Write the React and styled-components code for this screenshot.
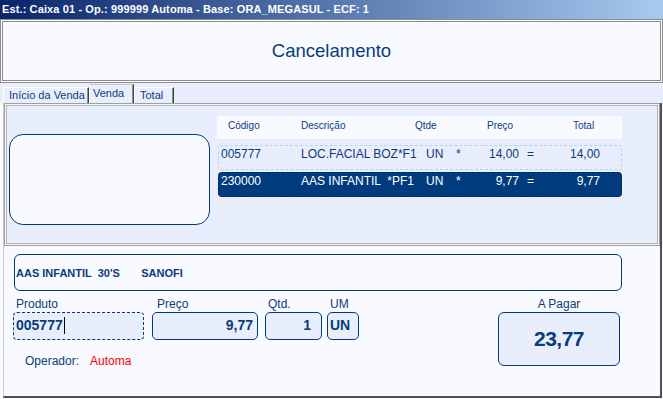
import React from 'react';
import styled, { createGlobalStyle } from 'styled-components';

const NAVY = '#003c7d';
const TEXT = '#0a3c7c';

const GlobalStyle = createGlobalStyle`
  html, body { margin: 0; padding: 0; background: #f8faff; }
  body { font-family: "Liberation Sans", Arial, sans-serif; }
  * { box-sizing: border-box; }
`;

const Window = styled.div`
  width: 663px;
  height: 399px;
  overflow: hidden;
  display: flex;
  flex-direction: column;
  background: #f8faff;
`;

const TitleBar = styled.div`
  height: 19px;
  flex: none;
  background: linear-gradient(to right, #0a246a, #a6caf0);
  color: #fff;
  font-weight: bold;
  font-size: 11px;
  letter-spacing: 0.12px;
  padding-left: 2px;
  line-height: 18px;
  white-space: nowrap;
`;

const Header = styled.header`
  height: 64px;
  flex: none;
  border: 1px solid #8c8c8c;
  box-shadow: inset 0 0 0 1px #fff, inset 0 0 0 2px #8c8c8c;
  background: #f8faff;
  display: flex;
  align-items: center;
  justify-content: center;
  padding-bottom: 1px;
  color: ${TEXT};
  font-size: 18.5px;
`;

const TabStrip = styled.div`
  height: 20px;
  flex: none;
  background: #e8eefc;
  display: flex;
  align-items: flex-end;
  padding-left: 3px;
`;

const Tab = styled.div`
  width: ${p => p.$w}px;
  flex: none;
  overflow: hidden;
  height: ${p => (p.$active ? 19 : 16)}px;
  padding-left: ${p => p.$pl}px;
  padding-top: ${p => (p.$active ? 1 : 0)}px;
  border-top: 1px solid ${p => (p.$active ? '#c4c4c4' : '#ffffff')};
  border-left: 1px solid #ffffff;
  border-right: 1px solid #404040;
  box-shadow: inset -1px 0 0 #909090;
  background: #e8eefc;
  color: ${TEXT};
  font-size: 11px;
  letter-spacing: ${p => p.$ls || 0}px;
  line-height: 15px;
  white-space: nowrap;
`;

const Body = styled.div`
  flex: 1;
  margin: 0 1px 1px 3px;
  border-left: 1px solid #c8c8c8;
  border-right: 2px solid #505050;
  border-bottom: 2px solid #505050;
  background: #f8faff;
  display: flex;
  flex-direction: column;
`;

const TabPanel = styled.div`
  height: 143px;
  flex: none;
  background: #e8eefc;
  border: 1px solid #a0a0a0;
  box-shadow: inset 0 0 0 1px #f4f6fc, inset 0 0 0 2px #b4b4b4;
  display: flex;
  align-items: flex-start;
`;

const ImageBox = styled.div`
  width: 201px;
  height: 91px;
  margin: 30px 0 0 4px;
  border: 1px solid ${NAVY};
  border-radius: 14px;
  background: #f8faff;
`;

const Grid = styled.div`
  width: 405px;
  margin: 12px 0 0 7px;
  display: flex;
  flex-direction: column;
`;

const GridHeader = styled.div`
  height: 23px;
  background: #f8faff;
  display: flex;
  padding-left: 11px;
  font-size: 10px;
  line-height: 20px;
  color: ${TEXT};
`;

const HeadCell = styled.div`
  width: ${p => (p.$w ? `${p.$w}px` : 'auto')};
  flex: none;
`;

const Row = styled.div`
  height: 25px;
  margin: ${p => p.$mt}px 0 0 1px;
  border: 1px dashed ${p => (p.$selected ? '#0a2550' : '#b4d2f2')};
  border-radius: ${p => (p.$selected ? 4 : 2)}px;
  background: ${p => (p.$selected ? NAVY : 'transparent')};
  color: ${p => (p.$selected ? '#ffffff' : TEXT)};
  display: grid;
  grid-template-columns: 80px 125px 30px 20px 43px 20px 61px;
  padding-left: 2px;
  font-size: 12px;
  line-height: 17px;
  white-space: pre;
`;

const Cell = styled.div`
  text-align: ${p => (p.$right ? 'right' : 'left')};
  padding-left: ${p => p.$pl || 0}px;
`;

const DescBox = styled.div`
  width: 608px;
  height: 37px;
  margin: 8px 0 0 10px;
  border: 1px solid ${NAVY};
  border-radius: 6px;
  background: #f8faff;
  display: flex;
  align-items: center;
  padding-left: 1px;
  color: ${TEXT};
  font-size: 11px;
  font-weight: bold;
  white-space: pre;
`;

const FormArea = styled.div`
  display: flex;
  align-items: flex-start;
  margin-top: 6px;
`;

const LeftColumn = styled.div`
  display: flex;
  flex-direction: column;
`;

const FieldsRow = styled.div`
  display: flex;
  align-items: flex-start;
`;

const Field = styled.div`
  width: ${p => p.$w}px;
  margin-left: ${p => p.$ml}px;
  display: flex;
  flex-direction: column;
  flex: none;
`;

const Label = styled.div`
  height: 15px;
  line-height: 14px;
  font-size: 12px;
  color: ${TEXT};
  padding-left: ${p => p.$pl || 0}px;
  text-align: ${p => (p.$center ? 'center' : 'left')};
  white-space: nowrap;
`;

const Input = styled.div`
  height: 28px;
  border: 1px ${p => (p.$dashed ? 'dashed' : 'solid')} ${NAVY};
  border-radius: ${p => (p.$dashed ? 4 : 5)}px;
  background: #e8eefc;
  display: flex;
  align-items: center;
  justify-content: ${p => (p.$right ? 'flex-end' : 'flex-start')};
  padding: 0 ${p => p.$pr || 0}px 3px ${p => p.$pl || 0}px;
  color: ${TEXT};
  font-size: 14px;
  font-weight: bold;
`;

const Caret = styled.span`
  display: inline-block;
  width: 1px;
  height: 17px;
  margin-left: 1px;
  margin-top: 2px;
  background: #000;
`;

const TotalBox = styled.div`
  height: 54px;
  border: 1px solid ${NAVY};
  border-radius: 6px;
  background: #e8eefc;
  display: flex;
  align-items: center;
  justify-content: center;
  color: ${TEXT};
  font-size: 21px;
  font-weight: bold;
  letter-spacing: -0.5px;
`;

const OperatorRow = styled.div`
  margin: 14px 0 0 21px;
  display: flex;
  gap: 11px;
  font-size: 12px;
  line-height: 14px;
`;

const OperatorLabel = styled.span`
  color: ${TEXT};
`;

const OperatorName = styled.span`
  color: #ff0000;
`;

const rows = [
  { code: '005777', desc: 'LOC.FACIAL BOZ*F1', un: 'UN', price: '14,00', total: '14,00' },
  { code: '230000', desc: 'AAS INFANTIL  *PF1', un: 'UN', price: '9,77', total: '9,77', selected: true },
];

export default function App() {
  return (
    <>
      <GlobalStyle />
      <Window>
        <TitleBar>Est.: Caixa 01 - Op.: 999999 Automa - Base: ORA_MEGASUL - ECF: 1</TitleBar>
        <Header>Cancelamento</Header>
        <TabStrip>
          <Tab $w={86} $pl={5}>Início da Venda</Tab>
          <Tab $w={45} $pl={3} $active>Venda</Tab>
          <Tab $w={40} $pl={5}>Total</Tab>
        </TabStrip>
        <Body>
          <TabPanel>
            <ImageBox />
            <Grid>
              <GridHeader>
                <HeadCell $w={73}>Código</HeadCell>
                <HeadCell $w={114}>Descrição</HeadCell>
                <HeadCell $w={72}>Qtde</HeadCell>
                <HeadCell $w={86}>Preço</HeadCell>
                <HeadCell>Total</HeadCell>
              </GridHeader>
              {rows.map((r, i) => (
                <Row key={r.code} $mt={i === 0 ? 6 : 2} $selected={r.selected}>
                  <Cell>{r.code}</Cell>
                  <Cell>{r.desc}</Cell>
                  <Cell>{r.un}</Cell>
                  <Cell>*</Cell>
                  <Cell $right>{r.price}</Cell>
                  <Cell $pl={8}>=</Cell>
                  <Cell $right>{r.total}</Cell>
                </Row>
              ))}
            </Grid>
          </TabPanel>
          <DescBox>{"AAS INFANTIL  30'S       SANOFI"}</DescBox>
          <FormArea>
            <LeftColumn>
              <FieldsRow>
                <Field $w={131} $ml={9}>
                  <Label $pl={3}>Produto</Label>
                  <Input $dashed $pl={2}>
                    005777<Caret />
                  </Input>
                </Field>
                <Field $w={106} $ml={8}>
                  <Label $pl={5}>Preço</Label>
                  <Input $right $pr={4}>9,77</Input>
                </Field>
                <Field $w={57} $ml={7}>
                  <Label $pl={3}>Qtd.</Label>
                  <Input $right $pr={10}>1</Input>
                </Field>
                <Field $w={32} $ml={5}>
                  <Label $pl={3}>UM</Label>
                  <Input $pl={2}>UN</Input>
                </Field>
              </FieldsRow>
              <OperatorRow>
                <OperatorLabel>Operador:</OperatorLabel>
                <OperatorName>Automa</OperatorName>
              </OperatorRow>
            </LeftColumn>
            <Field $w={122} $ml={139}>
              <Label $center>A Pagar</Label>
              <TotalBox>23,77</TotalBox>
            </Field>
          </FormArea>
        </Body>
      </Window>
    </>
  );
}
